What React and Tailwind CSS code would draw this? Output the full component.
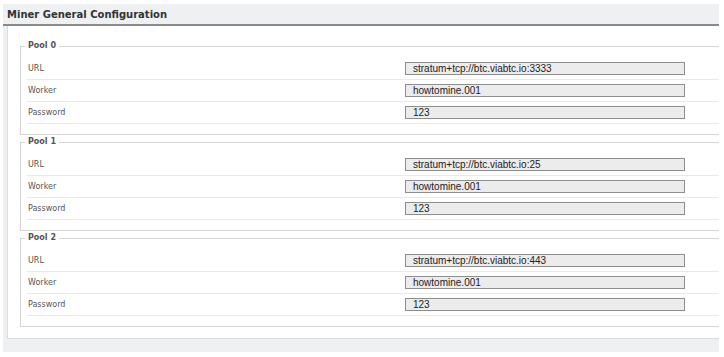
import React from "react";

const pools = [
  { name: "Pool 0", url: "stratum+tcp://btc.viabtc.io:3333", worker: "howtomine.001", password: "123" },
  { name: "Pool 1", url: "stratum+tcp://btc.viabtc.io:25", worker: "howtomine.001", password: "123" },
  { name: "Pool 2", url: "stratum+tcp://btc.viabtc.io:443", worker: "howtomine.001", password: "123" },
];

function Row({ label, value }) {
  return (
    <div className="flex items-center h-[22px] border-b border-[#e9e9e9] pl-[1px]">
      <div className="w-[377px] text-[8px] leading-[10px] text-[#555] font-['DejaVu_Sans',sans-serif]">{label}</div>
      <div className="w-[280px] h-[13px] border border-[#8e8e8e] bg-[#ececec] pl-[7px] flex items-center text-[10px] leading-[11px] text-[#222] font-['Liberation_Sans',Arial,sans-serif]">
        {value}
      </div>
    </div>
  );
}

function Pool({ pool, first }) {
  return (
    <fieldset className={`border border-[#d6d6d6] pl-[6px] pt-[7px] pb-[10px] w-[720px] ${first ? "" : "mt-[2px]"}`}>
      <legend className="ml-[-2px] px-[3px] text-[8px] leading-[10px] font-bold text-[#555] font-['DejaVu_Sans',sans-serif]">
        {pool.name}
      </legend>
      <Row label="URL" value={pool.url} />
      <Row label="Worker" value={pool.worker} />
      <Row label="Password" value={pool.password} />
    </fieldset>
  );
}

export default function App() {
  return (
    <div className="w-[724px] h-[357px] bg-white pt-[4px] pl-[3px]">
      <div className="w-[716px] bg-[#eef0f2] pb-[13px]">
        <div className="h-[22px] flex items-center pl-[4px] border-b-2 border-[#8a8a8a] text-[10px] font-bold text-[#333] font-['DejaVu_Sans',sans-serif]">
          Miner General Configuration
        </div>
        <div className="ml-[4px] bg-white border-l border-b border-[#dcdcdc] pt-[15px] pl-[12px] pb-[11px] overflow-hidden">
          {pools.map((p, i) => (
            <Pool key={p.name} pool={p} first={i === 0} />
          ))}
        </div>
      </div>
    </div>
  );
}
